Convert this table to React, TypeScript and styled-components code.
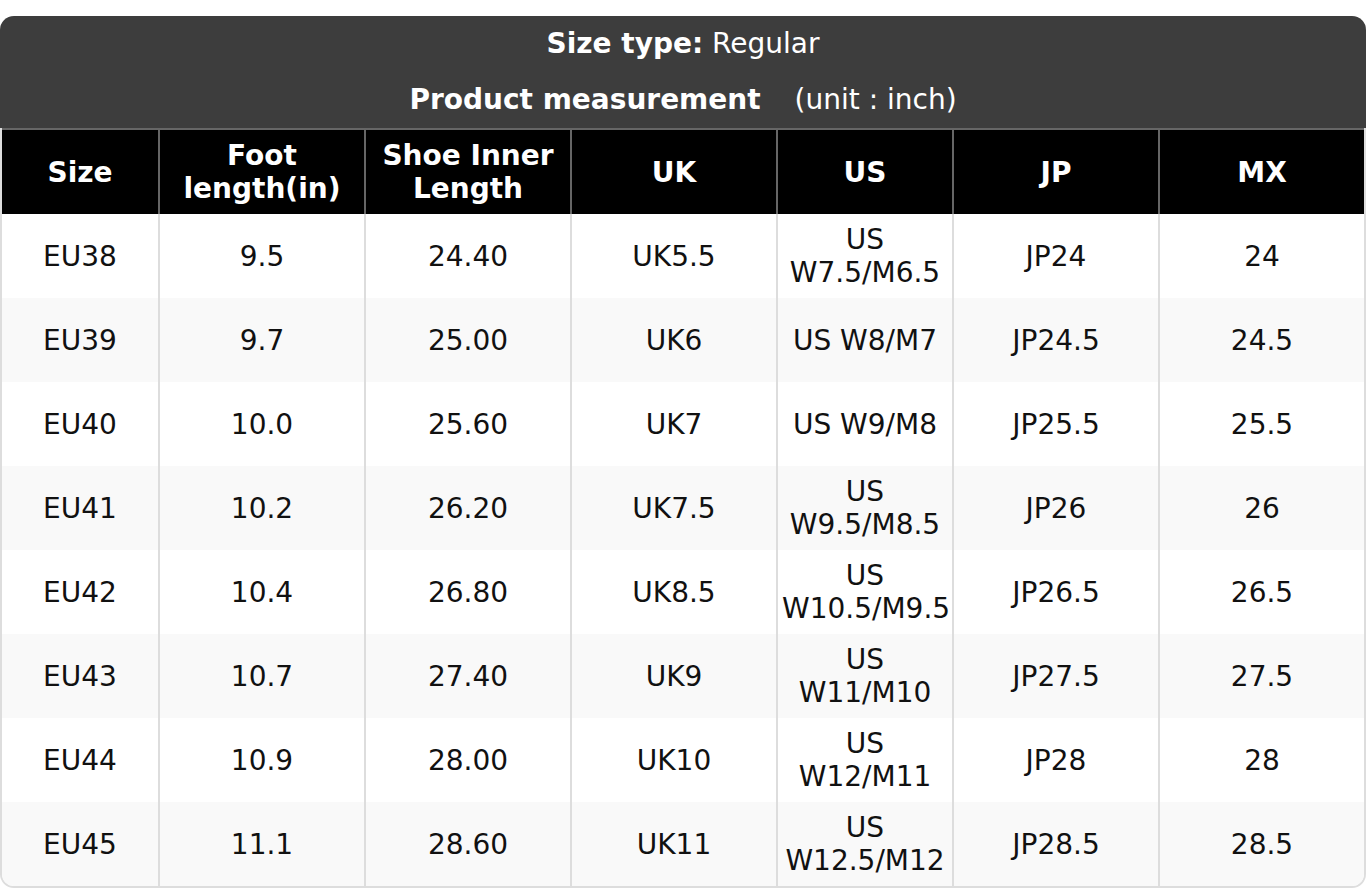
import React from "react";
import styled, { createGlobalStyle } from "styled-components";

const GlobalStyle = createGlobalStyle`
  html, body { margin: 0; padding: 0; background: #ffffff; }
  body { padding-top: 16px; font-family: "DejaVu Sans", "Liberation Sans", sans-serif; }
`;

const Card = styled.div`
  width: 1366px;
  box-sizing: border-box;
`;

const TitleBar = styled.div`
  background: #3d3d3d;
  color: #ffffff;
  border-radius: 14px 14px 0 0;
  text-align: center;
  font-size: 28px;
`;

const TitleLine = styled.div`
  height: 56px;
  line-height: 56px;
  white-space: nowrap;
`;

const Strong = styled.span`
  font-weight: 700;
`;

const UnitNote = styled.span<{ $gap: number }>`
  margin-left: ${(p) => p.$gap}px;
`;

const TableWrap = styled.div`
  overflow: hidden;
  border-radius: 0 0 14px 14px;
  border: 2px solid #dddddd;
  border-top: none;
  box-sizing: border-box;
`;

const Table = styled.table`
  width: 100%;
  border-collapse: collapse;
  table-layout: fixed;
  font-size: 28px;
  line-height: 33px;
`;

const HeadCell = styled.th`
  background: #000000;
  color: #ffffff;
  font-weight: 700;
  text-align: center;
  vertical-align: middle;
  height: 85px;
  padding: 0 6px;
  box-sizing: border-box;
  border: 2px solid #666666;
  border-bottom: none;
  &:first-child { border-left: none; }
  &:last-child { border-right: none; }
`;

const Row = styled.tr<{ $striped: boolean }>`
  background: ${(p) => (p.$striped ? "#f9f9f9" : "#ffffff")};
`;

const Cell = styled.td`
  color: #111111;
  text-align: center;
  vertical-align: middle;
  height: 84px;
  padding: 0 4px;
  box-sizing: border-box;
  border-left: 2px solid #dddddd;
  border-right: 2px solid #dddddd;
  &:first-child { border-left: none; }
  &:last-child { border-right: none; }
`;

const columns = [
  { label: "Size", width: 157 },
  { label: "Foot length(in)", width: 206 },
  { label: "Shoe Inner Length", width: 206 },
  { label: "UK", width: 206 },
  { label: "US", width: 176 },
  { label: "JP", width: 206 },
  { label: "MX", width: 205 },
];

const rows: string[][] = [
  ["EU38", "9.5", "24.40", "UK5.5", "US W7.5/M6.5", "JP24", "24"],
  ["EU39", "9.7", "25.00", "UK6", "US W8/M7", "JP24.5", "24.5"],
  ["EU40", "10.0", "25.60", "UK7", "US W9/M8", "JP25.5", "25.5"],
  ["EU41", "10.2", "26.20", "UK7.5", "US W9.5/M8.5", "JP26", "26"],
  ["EU42", "10.4", "26.80", "UK8.5", "US W10.5/M9.5", "JP26.5", "26.5"],
  ["EU43", "10.7", "27.40", "UK9", "US W11/M10", "JP27.5", "27.5"],
  ["EU44", "10.9", "28.00", "UK10", "US W12/M11", "JP28", "28"],
  ["EU45", "11.1", "28.60", "UK11", "US W12.5/M12", "JP28.5", "28.5"],
];

export default function App() {
  return (
    <>
      <GlobalStyle />
      <Card>
        <TitleBar>
          <TitleLine>
            <Strong>Size type:</Strong> Regular
          </TitleLine>
          <TitleLine>
            <Strong>Product measurement</Strong>
            <UnitNote $gap={34}>(unit : inch)</UnitNote>
          </TitleLine>
        </TitleBar>
        <TableWrap>
          <Table>
            <colgroup>
              {columns.map((c) => (
                <col key={c.label} style={{ width: c.width }} />
              ))}
            </colgroup>
            <thead>
              <tr>
                {columns.map((c) => (
                  <HeadCell key={c.label}>{c.label}</HeadCell>
                ))}
              </tr>
            </thead>
            <tbody>
              {rows.map((r, i) => (
                <Row key={r[0]} $striped={i % 2 === 1}>
                  {r.map((v, j) => (
                    <Cell key={j}>{v}</Cell>
                  ))}
                </Row>
              ))}
            </tbody>
          </Table>
        </TableWrap>
      </Card>
    </>
  );
}
